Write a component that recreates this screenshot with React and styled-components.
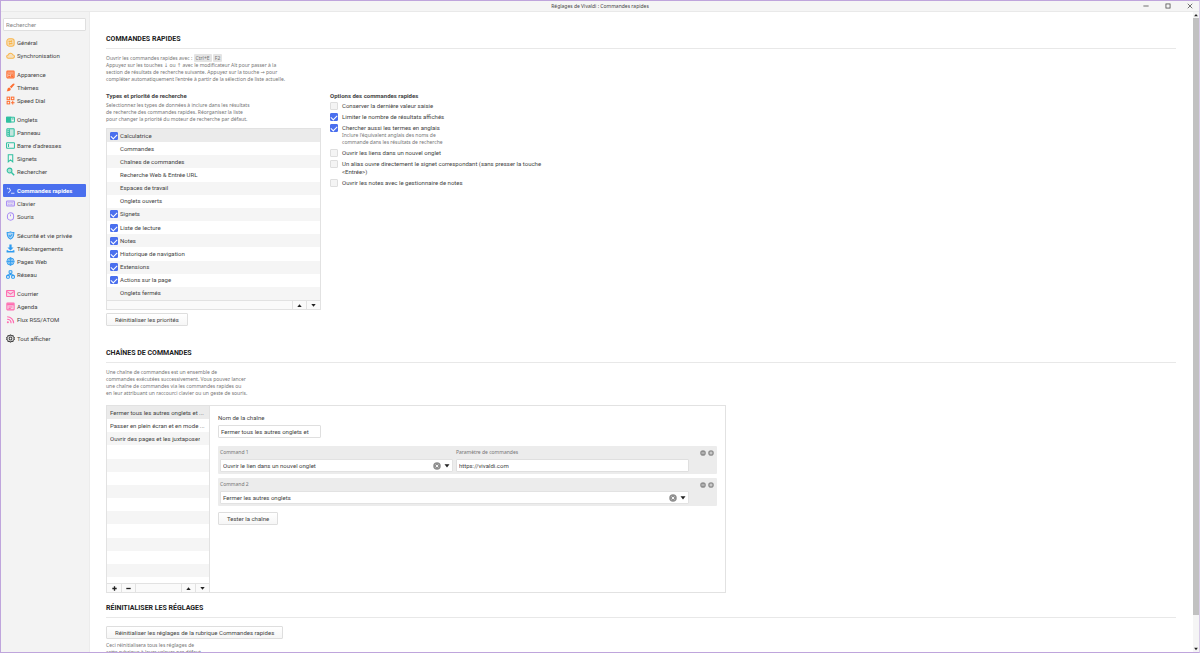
import React from 'react'
import styled, { createGlobalStyle } from 'styled-components'

const GlobalStyle = createGlobalStyle`
  * {
    box-sizing: border-box;
  }
  body {
    margin: 0;
    background: #fff;
    color: #444;
    font-family: Roboto, 'Noto Sans', sans-serif;
    font-size: 6px;
    line-height: 8px;
    overflow: hidden;
  }
  button, input, select {
    margin: 0;
    padding: 0;
    font: inherit;
    color: inherit;
  }
  h1, h2, h3, p, ul {
    margin: 0;
    padding: 0;
    font-size: inherit;
    font-weight: inherit;
  }
  ul {
    list-style: none;
  }
`

const outline = { fill: 'none', stroke: 'currentColor', strokeWidth: 1.8 }

const icons = {
  general: (
    <g {...outline}>
      <rect x="1.5" y="1.5" width="13" height="13" rx="4" fill="currentColor" fillOpacity=".35" />
      <path d="M4.5 6H10M10 4v4M11.5 10H6M6 8v4" />
    </g>
  ),
  cloud: (
    <path {...outline} fill="currentColor" fillOpacity=".3" d="M4.5 13a3 3 0 0 1-.5-6 4.200 4.200 0 0 1 8-.5 3.300 3.300 0 0 1 .5 6.500z" />
  ),
  appearance: (
    <g {...outline}>
      <rect x="1.500" y="2" width="13" height="12" rx="1" fill="currentColor" fillOpacity=".3" />
      <path d="M2 5.500h12M4 8.500h4M4 11.500h4M10 8.500h2.500v3H10z" />
    </g>
  ),
  brush: (
    <g fill="currentColor">
      <path d="M14.800 1.200c.8.8.2 2-.6 3L9.500 9.500 6.800 6.800l5-5c1-.9 2.200-1.400 3-.6z" />
      <path d="M6 7.800 8.500 10.200c.3 2.800-2 4.800-7.500 4.300 1.500-1 1.200-2 1.600-3.500C3 9 4.400 7.700 6 7.800z" />
    </g>
  ),
  dial: (
    <g {...outline}>
      <rect x="2" y="2" width="4.500" height="4.500" />
      <rect x="9.500" y="2" width="4.500" height="4.500" />
      <rect x="2" y="9.500" width="4.500" height="4.500" />
      <path d="M12 8.500v6.500M8.800 11.800h6.400" />
    </g>
  ),
  tabs: (
    <g {...outline}>
      <rect x="1" y="4" width="14" height="8.500" rx="1" />
      <path d="M1 4h7.500v8.500H1z" fill="currentColor" />
      <path d="M10.500 7h3" />
    </g>
  ),
  panel: (
    <g {...outline}>
      <rect x="1.500" y="1.500" width="13" height="13" rx="1" fill="currentColor" fillOpacity=".25" />
      <path d="M6 2v12M2.500 5H5M2.500 8H5M2.500 11H5" />
    </g>
  ),
  address: (
    <g {...outline}>
      <rect x="1" y="3" width="14" height="10" rx="1" />
      <path d="M4.500 5.500v5" />
    </g>
  ),
  bookmark: <path {...outline} d="M4 1.500h8v12.500l-4-3.500-4 3.500z" />,
  search: (
    <g {...outline}>
      <circle cx="6.300" cy="6.300" r="4.300" fill="currentColor" fillOpacity=".35" />
      <path d="m9.800 9.800 4.700 4.700" strokeWidth="2.600" />
    </g>
  ),
  prompt: (
    <g {...outline}>
      <path d="m2 3.500 2 2M5.500 3.500 8 8l-4 4.500M9 13h6" />
    </g>
  ),
  keyboard: (
    <g {...outline}>
      <rect x="1" y="3.500" width="14" height="9" rx="1.500" fill="currentColor" fillOpacity=".2" />
      <path d="M3.500 6.500h9M4 9.800h8" strokeDasharray="1.500 1" strokeWidth="1.200" />
    </g>
  ),
  mouse: (
    <g {...outline}>
      <rect x="2.500" y="1.500" width="11" height="13" rx="5.500" />
      <path d="M8 4.500v3" />
    </g>
  ),
  shield: (
    <g>
      <path {...outline} fill="currentColor" fillOpacity=".35" d="M8 1.500c2 1 4 1.300 6 1.300 0 6-1.500 9.700-6 11.700-4.500-2-6-5.700-6-11.700 2 0 4-.3 6-1.300z" />
      <path {...outline} d="m5 7.500 2.300 2.300L11 6" />
    </g>
  ),
  download: <path fill="currentColor" d="M6 1h4v5h3.500L8 11.500 2.500 6H6zM1 11h2.500l1 1.500h7l1-1.500H15v4H1z" />,
  globe: (
    <g {...outline} strokeWidth="1.500">
      <circle cx="8" cy="8" r="6.500" fill="currentColor" fillOpacity=".25" />
      <ellipse cx="8" cy="8" rx="3" ry="6.500" />
      <path d="M1.500 8h13M8 1.500v13" />
    </g>
  ),
  network: (
    <g {...outline}>
      <rect x="5.500" y="1.500" width="5" height="4.500" rx="1" />
      <rect x="1" y="10" width="5" height="4.500" rx="1" />
      <rect x="10" y="10" width="5" height="4.500" rx="1" />
      <path d="M8 6v2.500M3.500 10V8.500h9V10" />
    </g>
  ),
  mail: (
    <g {...outline}>
      <rect x="1" y="2.500" width="14" height="11" rx="1" fill="currentColor" fillOpacity=".2" />
      <path d="m2 4.500 6 4.500 6-4.500" />
    </g>
  ),
  calendar: (
    <g {...outline}>
      <rect x="1.500" y="2" width="13" height="12" rx="1" fill="currentColor" fillOpacity=".25" />
      <path d="M2 4.500h12" strokeWidth="3" />
      <path d="M4.500 9h7M4.500 11.500h4" />
    </g>
  ),
  rss: (
    <g {...outline} strokeWidth="2">
      <path d="M2 3c6.500 0 11.500 5 11.500 11.500M2 7.500c4 0 7 3 7 7" />
      <circle cx="3.300" cy="12.700" r=".8" fill="currentColor" />
    </g>
  ),
  gear: (
    <g {...outline}>
      <path d="m8 1.500 1.800 1.600 2.500-.3.700 2.400 2 1.300L14 8l1 1.500-2 1.300-.7 2.400-2.500-.3L8 14.500l-1.800-1.600-2.500.3-.7-2.400-2-1.300L2 8 1 6.500l2-1.300.7-2.400 2.500.3z" />
      <circle cx="8" cy="8" r="2.500" />
    </g>
  ),
  plus: <path d="M8 3v10M3 8h10" fill="none" stroke="currentColor" strokeWidth="3" />,
  minus: <path d="M3 8h10" fill="none" stroke="currentColor" strokeWidth="3" />,
  up: <path d="M3 11.500 8 5l5 6.500z" fill="currentColor" />,
  down: <path d="M3 4.500 8 11l5-6.500z" fill="currentColor" />,
  clear: (
    <g>
      <circle cx="8" cy="8" r="7.500" fill="currentColor" />
      <path d="m5.300 5.300 5.400 5.400M10.700 5.300l-5.400 5.400" stroke="#fff" strokeWidth="1.800" />
    </g>
  ),
  remove: (
    <g>
      <circle cx="8" cy="8" r="7.500" fill="currentColor" />
      <path d="M4 8h8" stroke="#eee" strokeWidth="2" />
    </g>
  ),
  add: (
    <g>
      <circle cx="8" cy="8" r="7.500" fill="currentColor" />
      <path d="M4 8h8M8 4v8" stroke="#eee" strokeWidth="2" />
    </g>
  ),
  winMin: <path d="M1 8h14" fill="none" stroke="currentColor" strokeWidth="2" />,
  winMax: <rect x="2.500" y="2.500" width="11" height="11" fill="none" stroke="currentColor" strokeWidth="2" />,
  winClose: <path d="m2 2 12 12M14 2 2 14" fill="none" stroke="currentColor" strokeWidth="2" />,
}

function Icon({ name, size = 9 }) {
  return (
    <svg width={size} height={size} viewBox="0 0 16 16" aria-hidden="true">
      {icons[name]}
    </svg>
  )
}

const menu = [
  { color: '#f9b64c', items: [['general', 'Général'], ['cloud', 'Synchronisation']] },
  { color: '#ff6e30', items: [['appearance', 'Apparence'], ['brush', 'Thèmes'], ['dial', 'Speed Dial']] },
  {
    color: '#2fc0a0',
    items: [['tabs', 'Onglets'], ['panel', 'Panneau'], ['address', "Barre d'adresses"], ['bookmark', 'Signets'], ['search', 'Rechercher']],
  },
  { color: '#a88cf5', items: [['prompt', 'Commandes rapides'], ['keyboard', 'Clavier'], ['mouse', 'Souris']] },
  {
    color: '#2e9bf0',
    items: [['shield', 'Sécurité et vie privée'], ['download', 'Téléchargements'], ['globe', 'Pages Web'], ['network', 'Réseau']],
  },
  { color: '#ff6bb0', items: [['mail', 'Courrier'], ['calendar', 'Agenda'], ['rss', 'Flux RSS/ATOM']] },
  { color: '#444', items: [['gear', 'Tout afficher']] },
]

const searchTypes = [
  ['Calculatrice', true],
  ['Commandes'],
  ['Chaînes de commandes'],
  ['Recherche Web & Entrée URL'],
  ['Espaces de travail'],
  ['Onglets ouverts'],
  ['Signets', true],
  ['Liste de lecture', true],
  ['Notes', true],
  ['Historique de navigation', true],
  ['Extensions', true],
  ['Actions sur la page', true],
  ['Onglets fermés'],
]

const options = [
  { label: 'Conserver la dernière valeur saisie' },
  { label: 'Limiter le nombre de résultats affichés', checked: true },
  {
    label: 'Chercher aussi les termes en anglais',
    checked: true,
    hint: <>Inclure l'équivalent anglais des noms de<br />commande dans les résultats de recherche</>,
  },
  { label: 'Ouvrir les liens dans un nouvel onglet' },
  { label: <>Un alias ouvre directement le signet correspondant (sans presser la touche<br />&lt;Entrée&gt;)</> },
  { label: 'Ouvrir les notes avec le gestionnaire de notes' },
]

const chains = [
  'Fermer tous les autres onglets et ...',
  'Passer en plein écran et en mode ...',
  'Ouvrir des pages et les juxtaposer',
]

function CommandSelect({ id, value }) {
  return (
    <SelectBox>
      <select id={id} defaultValue={value}>
        <option>{value}</option>
      </select>
      <IconButton type="button" aria-label="Effacer"><Icon name="clear" size={8} /></IconButton>
      <Arrow><Icon name="down" size={8} /></Arrow>
    </SelectBox>
  )
}

function CommandActions() {
  return (
    <Actions>
      <IconButton type="button" aria-label="Supprimer"><Icon name="remove" size={6} /></IconButton>
      <IconButton type="button" aria-label="Ajouter"><Icon name="add" size={6} /></IconButton>
    </Actions>
  )
}

function App() {
  return (
    <Window>
      <GlobalStyle />
      <TitleBar>
        <h1>Réglages de Vivaldi : Commandes rapides</h1>
        <WindowButtons>
          <IconButton type="button" aria-label="Réduire"><Icon name="winMin" size={6} /></IconButton>
          <IconButton type="button" aria-label="Agrandir"><Icon name="winMax" size={6} /></IconButton>
          <IconButton type="button" aria-label="Fermer"><Icon name="winClose" size={6} /></IconButton>
        </WindowButtons>
      </TitleBar>
      <Body>
        <Sidebar>
          <TextInput type="search" placeholder="Rechercher" aria-label="Rechercher" />
          <Menu>
            {menu.map((group) => (
              <MenuGroup key={group.color} $color={group.color}>
                {group.items.map(([icon, label]) => (
                  <li key={label}>
                    <MenuLink href="#" $active={label === 'Commandes rapides'}>
                      <Icon name={icon} />
                      <span>{label}</span>
                    </MenuLink>
                  </li>
                ))}
              </MenuGroup>
            ))}
          </Menu>
        </Sidebar>

        <Content>
          <Section>
            <SectionTitle>Commandes rapides</SectionTitle>
            <Hint>
              Ouvrir les commandes rapides avec : <Key>Ctrl+E</Key> <Key>F2</Key><br />
              Appuyez sur les touches ↓ ou ↑ avec le modificateur Alt pour passer à la<br />
              section de résultats de recherche suivante. Appuyez sur la touche → pour<br />
              compléter automatiquement l'entrée à partir de la sélection de liste actuelle.
            </Hint>
            <Columns>
              <TypesColumn>
                <SubTitle>Types et priorité de recherche</SubTitle>
                <Hint>
                  Selectionnez les types de données à inclure dans les résultats<br />
                  de recherche des commandes rapides. Réorganisez la liste<br />
                  pour changer la priorité du moteur de recherche par défaut.
                </Hint>
                <ListBox>
                  <Rows>
                    {searchTypes.map(([label, checked], i) => (
                      <Row key={label} $selected={i === 0}>
                        {checked ? (
                          <CheckLabel>
                            <Checkbox type="checkbox" defaultChecked />
                            <span>{label}</span>
                          </CheckLabel>
                        ) : (
                          <Indented>{label}</Indented>
                        )}
                      </Row>
                    ))}
                  </Rows>
                  <Toolbar>
                    <Spacer />
                    <ToolButton type="button" aria-label="Monter"><Icon name="up" size={7} /></ToolButton>
                    <ToolButton type="button" aria-label="Descendre"><Icon name="down" size={7} /></ToolButton>
                  </Toolbar>
                </ListBox>
                <Button type="button">Réinitialiser les priorités</Button>
              </TypesColumn>
              <div>
                <SubTitle>Options des commandes rapides</SubTitle>
                <Options>
                  {options.map((option, i) => (
                    <li key={i}>
                      <CheckLabel $wide>
                        <Checkbox type="checkbox" defaultChecked={option.checked} />
                        <span>{option.label}</span>
                      </CheckLabel>
                      {option.hint && <OptionHint>{option.hint}</OptionHint>}
                    </li>
                  ))}
                </Options>
              </div>
            </Columns>
          </Section>

          <Section $gap="21px">
            <SectionTitle>Chaînes de commandes</SectionTitle>
            <Hint>
              Une chaîne de commandes est un ensemble de<br />
              commandes exécutées successivement. Vous pouvez lancer<br />
              une chaîne de commandes via les commandes rapides ou<br />
              en leur attribuant un raccourci clavier ou un geste de souris.
            </Hint>
            <ChainBox>
              <ChainList>
                <Rows>
                  {Array.from({ length: 13 }, (_, i) => (
                    <Row key={i} $selected={i === 0}><ChainName>{chains[i]}</ChainName></Row>
                  ))}
                </Rows>
                <Toolbar>
                  <ToolButton type="button" aria-label="Ajouter une chaîne"><Icon name="plus" size={7} /></ToolButton>
                  <ToolButton type="button" aria-label="Supprimer la chaîne"><Icon name="minus" size={7} /></ToolButton>
                  <Spacer />
                  <ToolButton type="button" aria-label="Monter"><Icon name="up" size={7} /></ToolButton>
                  <ToolButton type="button" aria-label="Descendre"><Icon name="down" size={7} /></ToolButton>
                </Toolbar>
              </ChainList>
              <ChainEditor>
                <NameField>
                  <label htmlFor="chain-name">Nom de la chaîne</label>
                  <TextInput id="chain-name" defaultValue="Fermer tous les autres onglets et" />
                </NameField>
                <Command>
                  <Fields>
                    <Field>
                      <label htmlFor="command-1">Command 1</label>
                      <CommandSelect id="command-1" value="Ouvrir le lien dans un nouvel onglet" />
                    </Field>
                    <Field>
                      <label htmlFor="param-1">Paramètre de commandes</label>
                      <TextInput id="param-1" defaultValue="https://vivaldi.com" />
                    </Field>
                  </Fields>
                  <CommandActions />
                </Command>
                <Command>
                  <Fields>
                    <Field>
                      <label htmlFor="command-2">Command 2</label>
                      <CommandSelect id="command-2" value="Fermer les autres onglets" />
                    </Field>
                  </Fields>
                  <CommandActions />
                </Command>
                <Button type="button">Tester la chaîne</Button>
              </ChainEditor>
            </ChainBox>
          </Section>

          <Section $gap="9px">
            <SectionTitle>Réinitialiser les réglages</SectionTitle>
            <Button type="button">Réinitialiser les réglages de la rubrique Commandes rapides</Button>
            <Hint>
              Ceci réinitialisera tous les réglages de<br />
              cette rubrique à leurs valeurs par défaut.
            </Hint>
          </Section>
        </Content>

        <ScrollBar>
          <Icon name="up" size={6} />
          <Track><Thumb /></Track>
          <Icon name="down" size={6} />
        </ScrollBar>
      </Body>
    </Window>
  )
}

export default App

const Window = styled.div`
  display: flex;
  flex-direction: column;
  height: 100vh;
  border: 1px solid #bfa5dc;
  border-right-color: #d9cde8;
`
const TitleBar = styled.header`
  display: grid;
  grid-template-columns: 1fr auto 1fr;
  align-items: center;
  height: 11px;
  background: #f5f5f5;
  border-bottom: 1px solid #e9e9e9;

  h1 {
    grid-column: 2;
    font-family: 'Noto Sans', sans-serif;
    font-size: 5px;
  }
`
const WindowButtons = styled.div`
  display: flex;
  justify-content: flex-end;
  gap: 16px;
  padding-right: 6px;
`
const IconButton = styled.button`
  display: flex;
  flex: none;
  border: none;
  background: none;
  color: #8f8f8f;
  cursor: pointer;

  ${WindowButtons} & {
    color: #444;
  }
`
const Body = styled.div`
  display: flex;
  flex: 1;
  min-height: 0;
`
const Sidebar = styled.nav`
  flex: none;
  width: 89px;
  padding: 6px 3px 0 2px;
  background: #f3f3f3;
  border-right: 1px solid #ececec;
`
const TextInput = styled.input`
  display: block;
  width: 100%;
  height: 13px;
  padding: 0 2px;
  border: 1px solid #dfdfdf;
  border-radius: 1px;
  background: #fff;
  outline: none;

  &::placeholder {
    color: #858585;
  }
`
const Menu = styled.div`
  display: flex;
  flex-direction: column;
  gap: 6px;
  padding-top: 5px;
`
const MenuGroup = styled.ul`
  svg {
    color: ${(props) => props.$color};
  }
`
const MenuLink = styled.a`
  display: flex;
  align-items: center;
  gap: 2px;
  height: 13px;
  padding-left: 3px;
  border-radius: 1px;
  text-decoration: none;
  background: ${(props) => (props.$active ? '#4a6fee' : 'transparent')};
  color: ${(props) => (props.$active ? '#fff' : '#444')};
  font-weight: ${(props) => (props.$active ? 700 : 400)};

  ${MenuGroup} & svg {
    ${(props) => props.$active && 'color: #d5deff;'}
  }
`
const Content = styled.main`
  flex: 1;
  min-width: 0;
  padding: 21px 17px 0 16px;
  overflow: hidden;
`
const Section = styled.section`
  margin-top: ${(props) => props.$gap || 0};
`
const SectionTitle = styled.h2`
  margin-bottom: 6px;
  padding-bottom: 3px;
  border-bottom: 1px solid #e8e8e8;
  color: #222;
  font-size: 7px;
  font-weight: 700;
  line-height: 12px;
  text-transform: uppercase;
`
const SubTitle = styled.h3`
  margin-bottom: 2px;
  font-weight: 700;
  line-height: 9px;
`
const Hint = styled.p`
  color: #757575;
  font-family: 'Noto Sans', 'DejaVu Sans', sans-serif;
  font-size: 5px;
  line-height: 7px;
`
const Key = styled.kbd`
  padding: 1px 2px;
  border-radius: 1px;
  background: #e4e4e4;
  font-family: inherit;
`
const Columns = styled.div`
  display: flex;
  align-items: flex-start;
  gap: 9px;
  margin-top: 8px;
`
const TypesColumn = styled.div`
  width: 215px;
`
const ListBox = styled.div`
  margin: 5px 0 3px;
  border: 1px solid #e2e2e2;
`
const Rows = styled.ul`
  display: grid;
  grid-auto-rows: 1fr;
  height: 171px;
`
const Row = styled.li`
  display: flex;
  align-items: center;
  min-width: 0;
  padding: 0 3px;
  background: ${(props) => (props.$selected ? '#ebebeb' : '#fff')};

  &:nth-child(odd) {
    ${(props) => !props.$selected && 'background: #f5f5f5;'}
  }
`
const CheckLabel = styled.label`
  display: flex;
  align-items: flex-start;
  gap: ${(props) => (props.$wide ? '4px' : '2px')};
`
const Indented = styled.span`
  padding-left: 10px;
`
const Checkbox = styled.input`
  flex: none;
  width: 8px;
  height: 8px;
  appearance: none;
  border: 1px solid #dedede;
  border-radius: 1px;
  background: #f4f4f4;

  &:checked {
    display: grid;
    place-content: center;
    border-color: #4a6fee;
    background: #4a6fee;
  }
  &:checked::before {
    content: '';
    width: 5px;
    height: 3px;
    border: solid #fff;
    border-width: 0 0 1px 1px;
    transform: rotate(-45deg);
  }
`
const Toolbar = styled.div`
  display: flex;
  height: 9px;
  border-top: 1px solid #e2e2e2;
  background: #fafafa;
`
const Spacer = styled.div`
  flex: 1;
`
const ToolButton = styled.button`
  display: flex;
  align-items: center;
  justify-content: center;
  width: 14px;
  border: none;
  background: none;
  color: #222;

  &:not(:first-child) {
    border-left: 1px solid #e2e2e2;
  }
  & + ${Spacer} {
    border-left: 1px solid #e2e2e2;
  }
`
const Button = styled.button`
  display: block;
  height: 13px;
  padding: 0 8px;
  border: 1px solid #dedede;
  border-radius: 1px;
  background: linear-gradient(#fff, #f6f6f6);

  & + ${Hint} {
    margin-top: 3px;
  }
  ${SectionTitle} + & {
    margin-top: 8px;
  }
`
const Options = styled.ul`
  display: flex;
  flex-direction: column;
  gap: 3px;
`
const OptionHint = styled(Hint)`
  padding-left: 12px;
`
const ChainBox = styled.div`
  display: flex;
  max-width: 620px;
  min-height: 188px;
  margin-top: 8px;
  border: 1px solid #e2e2e2;
`
const ChainList = styled.div`
  display: flex;
  flex: none;
  flex-direction: column;
  justify-content: space-between;
  width: 103px;
  border-right: 1px solid #e2e2e2;
`
const ChainName = styled.span`
  overflow: hidden;
  white-space: nowrap;
  text-overflow: ellipsis;
`
const ChainEditor = styled.div`
  display: flex;
  flex: 1;
  flex-direction: column;
  align-items: flex-start;
  padding: 8px;

  ${Button} {
    margin-top: 2px;
  }
`
const NameField = styled.div`
  width: 103px;
  margin-bottom: 8px;

  label {
    display: block;
    margin-bottom: 3px;
  }
`
const Command = styled.div`
  display: flex;
  align-self: stretch;
  justify-content: space-between;
  height: 28px;
  margin-bottom: 4px;
  padding: 2px;
  border-radius: 1px;
  background: #ececec;
`
const Fields = styled.div`
  display: flex;
  flex: 1;
  gap: 3px;
`
const Field = styled.div`
  flex: 1;

  label {
    display: block;
    margin-bottom: 3px;
    color: #757575;
    font-family: 'Noto Sans', sans-serif;
    font-size: 5px;
  }
`
const SelectBox = styled.div`
  display: flex;
  align-items: center;
  height: 13px;
  padding: 0 1px 0 2px;
  border: 1px solid #e2e2e2;
  border-radius: 1px;
  background: #fff;

  select {
    flex: 1;
    min-width: 0;
    appearance: none;
    border: none;
    background: none;
  }
`
const Arrow = styled.span`
  display: flex;
  margin-left: 2px;
  color: #222;
`
const Actions = styled.div`
  display: flex;
  gap: 2px;
  padding: 2px 1px 0 11px;
`
const ScrollBar = styled.div`
  display: flex;
  flex: none;
  flex-direction: column;
  align-items: center;
  width: 6px;
  background: #f5f5f5;
  color: #222;
`
const Track = styled.div`
  flex: 1;
  align-self: stretch;
`
const Thumb = styled.div`
  height: 95%;
  background: #c1c1c1;
`
